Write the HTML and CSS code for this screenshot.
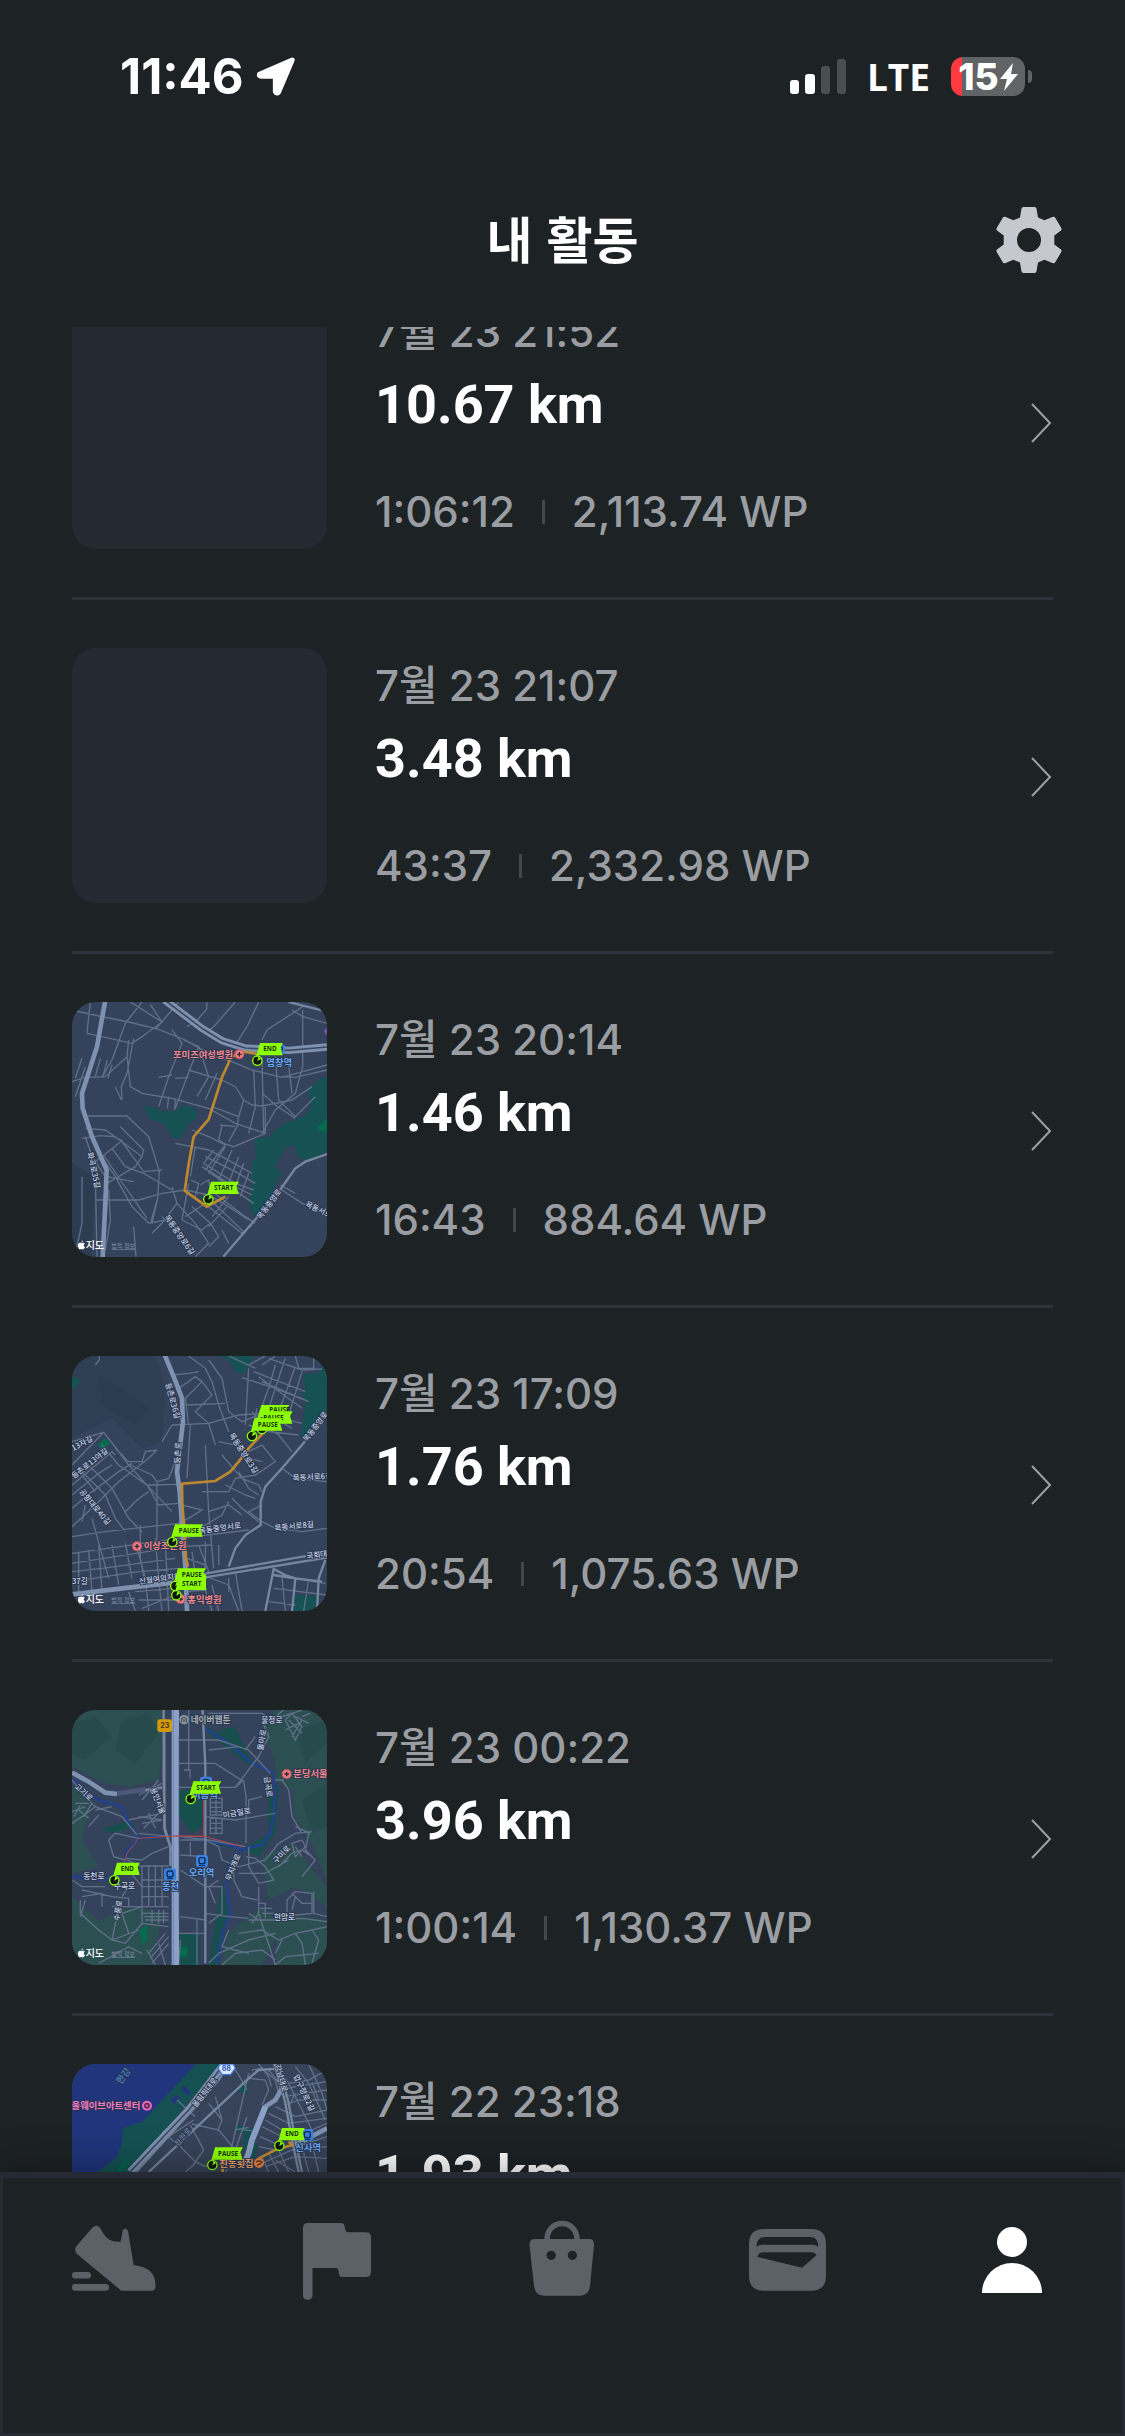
FILE: index.html
```html
<!DOCTYPE html>
<html lang="ko">
<head>
<meta charset="utf-8">
<meta name="viewport" content="width=device-width, initial-scale=1">
<title>내 활동</title>
<link rel="stylesheet" href="styles.css">
</head>
<body>
<svg class="defs" aria-hidden="true">
  <defs>
    <g id="pin"><circle r="14" fill="#10180c" stroke="#8cff00" stroke-width="4"/><path d="M0 1L3-12L12-6Z" fill="#8cff00"/></g>
    <g id="flag-long"><path d="M8-53H92L84-39L91-16H4L-2-2L-6-4Z" fill="#8cff00"/><use href="#pin"/></g>
    <g id="flag-short"><path d="M8-53H76L70-39L76-16H4L-2-2L-6-4Z" fill="#8cff00"/><use href="#pin"/></g>
    <g id="hospital"><circle r="15" fill="#c9525f"/><circle r="12" fill="#e87d86"/><path d="M-7 0H7M0-7V7" stroke="#3a2831" stroke-width="4"/></g>
    <g id="train"><rect x="-18" y="-18" width="36" height="36" rx="8" fill="#3a80e0"/><rect x="-9" y="-10" width="18" height="18" rx="6" fill="none" stroke="#0f2950" stroke-width="4"/><path d="M-9 13H9" stroke="#0f2950" stroke-width="3"/></g>
    <g id="apple" fill="#fff"><path d="M-1-6C3-9 8-8 9-5C5-2 5 3 10 5C8 10 5 13 2 12Q-1 10-4 12C-8 13-12 4-11-1C-10-7-5-9-1-6ZM-1-8Q-1-13 4-15Q4-9-1-8Z"/></g>
  </defs>
</svg>
<div class="app">
  <div class="status">
    <div class="status-side">
      <span class="time">11:46</span>
      <svg class="location" viewBox="474 52 120 118" aria-hidden="true"><path d="M583 61L484 104Q482 110 489 110H532V157Q536 165 542 158Z" fill="#fff" stroke="#fff" stroke-width="15" stroke-linejoin="round"/></svg>
    </div>
    <div class="status-side status-right">
      <svg class="signal" viewBox="0 0 56 36" aria-hidden="true"><g fill="#fff"><rect y="21" width="9" height="14" rx="3"/><rect x="15" y="15" width="10" height="20" rx="3"/></g><g fill="#4a4e51"><rect x="31" y="7" width="9" height="28" rx="3"/><rect x="47" width="9" height="35" rx="3"/></g></svg>
      <span class="network">LTE</span>
      <div class="battery">
        <span class="battery-body"><span class="battery-level">15</span><svg class="bolt" viewBox="0 0 18 28" aria-hidden="true"><path d="M13 0L0 16H7L4 28L18 11H11Z" fill="#fff"/></svg></span>
        <span class="battery-cap"></span>
      </div>
    </div>
  </div>

  <header class="header">
    <h1 class="title">내 활동</h1>
    <button class="settings" type="button" aria-label="설정">
      <svg class="gear" viewBox="-33 -33 66 66" aria-hidden="true"><path fill="#c5c8cf" fill-rule="evenodd" d="M-5.500-33H5.500Q7.300-33 7.600-31L9-22.500L15.500-19.700L24-23.200Q25.600-23.500 26.400-22L32.300-12Q33-10.500 32-9.500L25.300-4.500V4.500L32 9.500Q33 10.500 32.300 12L26.400 22Q25.600 23.500 24 23.200L15.500 19.700L9 22.500L7.600 31Q7.300 33 5.500 33H-5.500Q-7.300 33-7.600 31L-9 22.500L-15.500 19.700L-24 23.200Q-25.600 23.500-26.400 22L-32.300 12Q-33 10.500-32 9.500L-25.300 4.500V-4.500L-32-9.500Q-33-10.500-32.300-12L-26.400-22Q-25.600-23.500-24-23.200L-15.500-19.700L-9-22.500L-7.600-31Q-7.300-33-5.500-33ZM0-12A12 12 0 1 0 0 12A12 12 0 1 0 0-12Z"/></svg>
    </button>
  </header>

  <main class="content">
    <ul class="activities">
      <li class="activity"><a class="row" href="#a1">
        <span class="thumb"></span>
        <span class="info"><span class="date">7월 23 21:52</span><strong class="distance">10.67 km</strong><span class="stats"><span>1:06:12</span><span class="bar"></span><span>2,113.74 WP</span></span></span>
        <svg class="chevron" viewBox="0 0 22 42" aria-hidden="true"><path d="M1 3L19 22L1 41"/></svg>
      </a></li>
      <li class="activity"><a class="row" href="#a2">
        <span class="thumb"></span>
        <span class="info"><span class="date">7월 23 21:07</span><strong class="distance">3.48 km</strong><span class="stats"><span>43:37</span><span class="bar"></span><span>2,332.98 WP</span></span></span>
        <svg class="chevron" viewBox="0 0 22 42" aria-hidden="true"><path d="M1 3L19 22L1 41"/></svg>
      </a></li>
      <li class="activity"><a class="row" href="#a3">
        <svg class="thumb" viewBox="30 36 765 765" role="img" aria-label="경로 지도">
          <rect x="30" y="36" width="765" height="765" fill="#34435b"/>
          <path d="M30 520L100 560L90 800H30Z" fill="#2c394c" opacity=".6"/>
          <g fill="#165153"><path d="M244 346L270 350L300 364L340 362L365 346L395 352L407 370L398 388L376 405L360 446L335 445L305 402L262 386Z"/><path d="M795 262L776 265L738 300L747 345L730 378L665 400L620 440L576 448L583 505L570 515L568 600L560 640L577 680L610 650L657 550L640 530L670 470L695 465L708 500L730 512L795 485Z"/></g>
          <path d="M795 385L763 415L795 430Z" fill="#066a4f"/>
          <g class="streets">
            <path d="M75 130L80 80L85 36M30 60L110 78L200 96L290 118L370 150L450 196L510 215L570 240L660 262L795 225M205 36L300 96L240 140L210 160L75 130M240 36L190 100L150 210L120 262M265 44L300 96M280 118L330 60L350 36M435 36L434 58L400 96L375 110M520 36L455 110L430 130M590 36L555 110L520 165M722 50L615 120L600 150M722 60V230L700 310L640 360L600 430M690 60L722 80L795 100M70 262L130 260L195 200L200 150M30 275L70 262M40 320L70 230M180 330L178 290L195 250L215 145M195 200L205 290L240 310L330 325L440 355L520 400L610 430V350"/>
            <path d="M330 120L360 160L320 260L290 350M365 150L410 170L375 260L340 355M410 170L440 260L405 320M380 240L480 270L520 290L545 330L530 380L450 350M430 330L465 250M545 330L570 345L600 348L690 330L750 290M575 240L580 350L560 430M600 200L605 430M640 200L650 330L700 380L760 320M680 225L690 310M660 260L700 262L795 240M600 310L640 345L700 385M290 262L330 255M340 265L380 262M178 330L160 290M100 260L115 205M122 262L136 210M138 266L150 225M40 265L60 205M320 320L316 355M340 325L338 360M480 405L470 450L490 462L515 470L610 430M475 405L520 410M530 380L525 410L500 455"/>
            <path d="M76 378H195L260 440L292 545L287 625L265 700M70 415L130 420L180 455L240 500L245 480L175 410M60 445L115 437L155 440L180 452L100 515M70 440L90 500L130 560M118 500L160 560L210 650L260 700M125 495L175 570L255 685M150 475L190 530L245 550L330 600M180 455L245 545L300 540M135 580L220 530L240 500M100 630H230L300 610L370 600L440 615L500 650L560 690M135 560L215 575M100 560L105 800M140 600L145 690L130 780M60 560V700L40 790M215 710L222 800M287 625L270 700M330 590L345 640L300 700L270 730M260 700L310 690M345 640L400 700L440 760L400 800"/>
            <path d="M340 460L440 480L480 500L570 550M390 420L440 440L490 465L430 540M400 470L385 560M430 500L520 545L580 580M455 480L425 520L520 580L575 600M440 545L575 640M490 470L440 550M510 480L470 570M530 500L500 580M545 520L520 590M560 550L535 620M420 530L500 580L570 615M380 580L360 690L420 720L445 700L390 650M385 570L410 580L400 620M415 585L440 570L445 600L550 680L580 700M370 680L445 630L550 730M440 650L540 730L570 705M445 700L470 740L440 770M450 680L500 620M495 650L440 710M500 760L480 720M300 680L350 720M795 665L720 640L660 600M655 585L700 610"/>
          </g>
          <path class="avenue-thin" d="M484 800L570 700L640 620L700 535L730 515L795 492"/>
          <path class="avenue" d="M130 30L105 170L60 310L62 355L90 440L134 540L130 640L122 801"/>
          <path class="rail" d="M308 30L420 115L480 152L550 174L680 181L795 171"/><path class="rail-core" d="M308 30L420 115L480 152L550 174L680 181L795 171"/>
          <path class="avenue-thin" d="M680 36L795 65"/>
          <path class="route" d="M586 192L545 185L508 200L480 262L440 388L395 440L382 510L368 602L434 650L490 620"/>
          <circle cx="797" cy="124" r="10" fill="#7052a6"/>
          <g class="map-text red"><text x="333" y="203">포미즈여성병원</text></g><use href="#hospital" x="532" y="193"/>
          <g class="map-text blue"><text x="613" y="227">염창역</text></g>
          <g class="map-text road"><text transform="translate(76 488)rotate(78)">화곡로35길</text><text transform="translate(596 689)rotate(-53)">목동중앙로</text><text transform="translate(728 648)rotate(25)">목동서로</text><text transform="translate(306 682)rotate(55)">목동중앙로6길</text></g>
          <use href="#train" transform="translate(654 178)scale(.8)"/><use href="#flag-short" x="586" y="212"/><text class="flag-text" x="604" y="184">END</text>
          <use href="#flag-long" x="439" y="628"/><text class="flag-text" x="456" y="600">START</text>
          <use href="#apple" x="59" y="766"/><text class="maps-name" x="71" y="777">지도</text><text class="legal" x="148" y="775">법적 정보</text>
        </svg>
        <span class="info"><span class="date">7월 23 20:14</span><strong class="distance">1.46 km</strong><span class="stats"><span>16:43</span><span class="bar"></span><span>884.64 WP</span></span></span>
        <svg class="chevron" viewBox="0 0 22 42" aria-hidden="true"><path d="M1 3L19 22L1 41"/></svg>
      </a></li>
      <li class="activity"><a class="row" href="#a4">
        <svg class="thumb" viewBox="30 33 765 765" role="img" aria-label="경로 지도">
          <rect x="30" y="33" width="765" height="765" fill="#34435b"/>
          <path d="M30 33H280L310 130L300 290L240 310L150 220L30 280Z" fill="#2f3c51" opacity=".75"/><path d="M110 90L180 130L260 190L220 240L120 180Z" fill="#2b374b" opacity=".4"/>
          <g fill="#165153"><path d="M466 33L500 45L520 80L545 88L575 33ZM795 60L775 70L768 85L720 88L730 120L720 150L732 165L716 275L750 260L795 205ZM30 95L50 98L54 112L44 128L30 132ZM700 750L765 752L760 798H695Z"/></g><path d="M107 298L130 279L145 295L120 317Z" fill="#066a4f"/>
          <g class="streets">
            <path d="M100 60L112 45V33M30 290L125 262L155 300L200 360L250 415L330 500M30 360L125 262M30 420L150 320L160 330M30 450L110 385L150 360M30 490L90 440L170 380L210 355M50 370L130 450L160 520L190 560M70 350L150 430L200 520L240 560M30 545L100 480L170 410L260 340L285 315M100 440L60 390M120 300L170 360L255 420L350 418M160 310L200 350L240 350L250 320L285 315M205 360L270 390L285 410V600M285 410L320 400L340 350M330 240L300 290M255 420L290 480L350 475M190 500L225 465L260 440M90 520L140 700M60 530L70 480M30 575L130 560L350 535L380 520"/>
            <path d="M380 33L430 70L450 110L470 180L500 260M440 45L480 100L500 200L540 230L590 210M330 90L380 85L410 80M350 130L400 95L420 110L370 160L380 240M330 240L440 235L530 210L600 205L720 235M375 180L490 175M420 110L450 150L400 200L440 235L460 300M385 240L375 400M430 300L440 500L455 670M500 33L580 70M540 98L640 130L740 170M560 70L550 240M560 60L610 33M575 80L730 140M590 95L720 190M600 60L640 33M620 40L720 75L780 72M600 110L730 165M640 60L620 130L590 210M670 40L640 130L620 190M700 65L650 200M720 80L680 210M700 33L710 70H755V33M560 240L620 260L710 270M570 200L600 240L650 270L690 320M600 180L640 220L690 250M585 190L570 260M470 290L520 300L560 340L600 350M480 330L540 400L590 420L600 440M530 380L560 430L590 450M490 420L550 450L580 460M420 440H500L520 400L580 390L640 350L600 300L560 320M510 460L540 490L590 530M500 470L480 510L430 540L360 570M440 500L500 480L540 510M360 480L420 495L380 520M600 480L560 500L600 530L640 550L720 560L795 550M660 370L700 400L795 410"/>
            <path d="M30 625L350 580L560 555M30 655L350 605L450 600M30 680L120 670L340 640M30 710L230 680L350 670M50 620V750M80 615L90 740M110 600L120 740M150 600L170 720M190 595L210 700M220 590L250 700L260 798M235 540V640L250 720M280 580L290 700L300 798M310 590L320 798M390 620L400 690M410 600L440 680M430 590V670M470 600V660M375 640L430 660M220 740L340 730M230 765H340M240 790L340 750M200 740L220 798M370 740L430 735L450 798M420 690L500 720L530 798M520 680L540 798M630 690L790 715M635 730L795 750M620 770L700 780M660 695L670 798M740 705L725 798M450 720L470 798M500 700V740"/>
          </g>
          <path class="avenue" d="M308 30L335 95L360 160L363 230L345 380L353 440L360 540L370 660L375 798"/>
          <path class="avenue" d="M30 748L200 728L335 713L430 690"/><path d="M430 686L795 622M430 697L795 638" class="avenue-thin"/>
          <path class="avenue-thin" d="M795 205L720 300L660 370L610 425L596 470V540L550 570L520 610L500 665M610 798L635 672L670 690L700 700L690 798M790 645L770 700L765 798M635 690L700 700L780 710"/>
          <path class="route" d="M605 262L560 310L530 350L505 380L460 408L360 416L361 480L368 560L372 640L378 665"/>
          <g class="map-text road"><text transform="translate(310 116)rotate(75)">등촌로36길</text><text transform="translate(354 356)rotate(-88)">등촌로</text><text transform="translate(36 402)rotate(-38)">등촌로13아길</text><text transform="translate(34 318)rotate(-28)">13자길</text><text transform="translate(50 440)rotate(50)">공항대로40길</text><text transform="translate(500 270)rotate(57)">목동중앙로3길</text><text transform="translate(735 292)rotate(-53)">목동중앙로</text><text transform="translate(692 407)rotate(-3)">목동서로6길</text><text transform="translate(638 558)rotate(-6)">목동서로8길</text><text transform="translate(412 566)rotate(-8)">목동중앙서로</text><text transform="translate(232 718)rotate(-8)">신월여의지하</text><text transform="translate(734 642)rotate(-8)">국회대로</text><text x="30" y="718">37길</text></g>
          <g class="map-text red"><text x="245" y="613">이상조은원</text><text x="376" y="773">홍익병원</text></g><use href="#hospital" x="225" y="604"/><use href="#hospital" x="356" y="762"/>
          <use href="#flag-long" x="590" y="233"/><text class="flag-text" x="622" y="202">PAUSE</text><use href="#flag-long" x="600" y="252"/><text class="flag-text" x="604" y="224">PAUSE</text><use href="#flag-long" x="570" y="273"/><text class="flag-text" x="587" y="245">PAUSE</text>
          <use href="#flag-long" x="331" y="591"/><text class="flag-text" x="350" y="564">PAUSE</text>
          <use href="#flag-long" x="340" y="723"/><use href="#flag-long" x="343" y="751"/><path d="M350 688H432V735H352Z" fill="#8cff00"/><text class="flag-text" x="359" y="696">PAUSE</text><text class="flag-text" x="360" y="723">START</text>
          <use href="#apple" x="59" y="763"/><text class="maps-name" x="71" y="774">지도</text><text class="legal" x="148" y="772">법적 정보</text>
        </svg>
        <span class="info"><span class="date">7월 23 17:09</span><strong class="distance">1.76 km</strong><span class="stats"><span>20:54</span><span class="bar"></span><span>1,075.63 WP</span></span></span>
        <svg class="chevron" viewBox="0 0 22 42" aria-hidden="true"><path d="M1 3L19 22L1 41"/></svg>
      </a></li>
      <li class="activity"><a class="row" href="#a5">
        <svg class="thumb" viewBox="30 30 765 765" role="img" aria-label="경로 지도">
          <rect x="30" y="30" width="765" height="765" fill="#34435b"/>
          <g fill="#2c5052"><path d="M30 30H300V150L290 240L200 260L130 250L30 200ZM640 30H795V540L750 430L700 360L690 270L640 240L640 180L600 90ZM30 590L150 700L30 700ZM30 260L90 300L60 420L110 500L30 520ZM600 470L690 430L760 520L795 560V620L700 560L620 600ZM30 700L200 620L300 640L270 795H30ZM500 700L600 620L660 680L600 795H480ZM650 640L795 660V795H640Z"/></g>
          <g fill="#25484b" opacity=".7"><path d="M30 70L100 50L150 110L70 180L30 160ZM180 60L260 40L290 100L220 190L160 150ZM700 90L795 60V130L730 190ZM720 300L795 250V380L750 400Z"/></g>
          <g fill="#164f4d"><path d="M430 80L500 110L590 200L560 195L440 100ZM345 270H420V380L390 400L345 340ZM620 250L650 260L640 400L590 470L540 450L620 400ZM350 700H410V795H350ZM480 540L500 640L470 795H440ZM470 90L520 80L560 170ZM120 390L200 360L220 380L150 400ZM430 415L540 450L440 430Z"/></g>
          <path d="M232 690L256 675V720L240 735ZM352 740H375V770H352Z" fill="#066a4f"/>
          <g class="river"><path d="M430 85L500 130L570 190L630 215L637 250V340L625 400L600 435L540 448L500 435L350 405L230 415L200 370L180 320L110 300L80 280L30 235M540 448L500 500L495 560L505 640L480 700L465 790M230 415L195 450L180 510L130 540L30 530"/></g>
          <g class="streets">
            <path d="M350 120H470L560 150L625 220M350 190H460L545 245L552 290V430M345 262H520L545 240M355 410L440 420L550 440M380 30V210M366 210H384V235M440 150L530 140M420 30L430 190V420M30 240L70 290L100 320L180 350L225 405M100 320L60 350L30 370M100 330L150 320M65 350L90 310M80 355L50 330M110 345L80 380M230 415L160 400L140 420L155 470L190 480M245 270L300 265M230 285L300 250M240 300L290 240M300 340L200 360M240 370L300 360L230 350M260 340L280 385M245 385L290 340M230 400L330 410M190 475L240 480L270 460L320 440"/>
            <path d="M445 295H480V345H445ZM445 308H480M445 322H480M445 335H480M462 295V345M445 355H480V400H445ZM445 370H480M445 385H480M462 355V400M430 350L520 360L640 340M560 340V300L600 290M430 420L470 440L480 480L530 500L610 480L650 430L700 400L750 395M552 470L580 475L610 500L635 540L590 550L560 500V440M515 470V540L540 590L585 600M470 540L440 560L460 610M590 560L590 640L640 795M530 520H610L680 480M690 430L720 420L730 440L700 470ZM700 440L720 470M740 400L730 450L760 480L720 530M650 500L690 460L720 450L750 470M660 240L680 270L690 350L720 400M640 240L665 240M700 380L745 400"/>
            <path d="M240 498H320M240 540H320M240 560H320M240 590H320M150 620H320M240 498V670M260 500V620M280 500V620M300 500V620M195 480L240 500M190 500L240 560M240 640H320M245 650H320M250 660H320M240 670L320 680M270 630V670M290 630V670M305 630V670M60 570L150 590L200 595V620M30 540L60 560H130M55 600V640L110 690L150 720M60 590L120 580V620M70 600L55 650M170 620L150 720L190 730L240 670M180 590L200 560M200 700L180 640L240 620M150 720L230 690M110 790L200 740L240 760M260 760L310 700M265 775L320 710M270 790L320 730M255 750L280 795M290 730L310 795M355 420H425M355 465L425 470M385 425V465M355 510L430 560M355 650L430 660M350 700H430M405 660V795M355 720L350 795M430 560H480V640L440 670M430 640L500 650L560 655"/>
            <path d="M560 660H650L720 655L795 665M675 640V600L700 575L750 580V640L700 645M590 610H610V655M560 640L590 660M595 625H630M600 640H640M690 580L720 610H750M700 590L690 630M755 575V640L795 650M530 700L600 690L650 720L700 700L750 690L795 680M640 795L670 770L770 760M440 790L470 760L560 720L640 700M480 795L520 760L600 750L640 780M500 690L480 740L560 760M570 670L590 640M700 700L720 730L730 795M660 720L640 760M750 690L770 720L750 790M670 60L690 40L720 80L700 120ZM680 60L720 100M700 50L740 70M670 90L710 70M690 110L720 60M440 40H600L630 60L720 30M600 60L620 110L590 170L520 262M640 50L665 30M720 50L745 40M550 150L580 110M40 310L80 310M30 335L70 320M35 350L55 315"/>
          </g>
          <path d="M30 218L80 245L130 278L165 282" class="avenue"/><path d="M165 281L250 268" stroke="#4c5876" stroke-width="14" fill="none"/><path d="M250 270L300 262" class="avenue-thin"/>
          <path d="M305 30V230L308 390L325 440V498M422 30L430 200V790" class="avenue-thin"/><path d="M307 90V380L328 450" class="avenue-thin"/>
          <path d="M340 30V795" stroke="#8b9fc7" stroke-width="22" fill="none"/><path d="M334 30V795M350 110V660" stroke="#7184ad" stroke-width="3" fill="none"/>
          <path d="M425 250V408L340 408L230 415L195 460L185 495M340 408L430 410L540 440" class="route-red"/>
          <rect x="286" y="58" width="44" height="38" rx="7" fill="#d39b0b"/><text x="295" y="84" class="shield">23</text>
          <circle cx="366" cy="59" r="14" fill="#8c959c"/><path d="M359 66V56L366 52L373 56V66M366 66V57" stroke="#39434d" stroke-width="3" fill="none"/>
          <g class="map-text gray"><text x="386" y="69">네이버웹툰</text></g>
          <g class="map-text road"><text x="598" y="70">불정로</text><text transform="translate(602 152)rotate(-80)">돌마로</text><text transform="translate(606 230)rotate(82)">금곡로</text><text transform="translate(36 262)rotate(42)">고기로</text><text transform="translate(264 266)rotate(68)">용인서울</text><text transform="translate(484 354)rotate(-10)">미금일로</text><text transform="translate(643 492)rotate(-47)">구미로</text><text transform="translate(505 544)rotate(-68)">무지개로</text><text x="64" y="536">동천로</text><text x="156" y="566">수곡로</text><text transform="translate(172 664)rotate(-82)">수풍로</text><text x="636" y="660">현암로</text></g>
          <g class="map-text blue"><text x="390" y="295">미금역</text><text x="380" y="528">오리역</text><text x="300" y="569">동천</text></g>
          <g class="map-text red"><text x="694" y="232">분당서울대</text></g><use href="#hospital" x="674" y="222"/>
          <use href="#train" x="432" y="248"/><use href="#train" x="420" y="483"/><use href="#train" x="324" y="523"/>
          <use href="#flag-long" x="386" y="297"/><text class="flag-text" x="403" y="270">START</text>
          <use href="#flag-short" x="157" y="541"/><text class="flag-text" x="176" y="513">END</text>
          <use href="#apple" x="59" y="760"/><text class="maps-name" x="71" y="771">지도</text><text class="legal" x="148" y="769">법적 정보</text>
        </svg>
        <span class="info"><span class="date">7월 23 00:22</span><strong class="distance">3.96 km</strong><span class="stats"><span>1:00:14</span><span class="bar"></span><span>1,130.37 WP</span></span></span>
        <svg class="chevron" viewBox="0 0 22 42" aria-hidden="true"><path d="M1 3L19 22L1 41"/></svg>
      </a></li>
      <li class="activity"><a class="row" href="#a6">
        <svg class="thumb" viewBox="30 42 765 765" role="img" aria-label="경로 지도">
          <rect x="30" y="42" width="765" height="765" fill="#364359"/>
          <path d="M30 42H480L200 366L120 440H30Z" fill="#155153"/><path d="M30 42H402L240 216L210 224L182 235L180 275L165 320L110 366L30 420ZM326 150L342 134L354 144L335 163ZM358 114L368 107L388 130L378 138Z" fill="#20357c"/>
          <path d="M170 350L190 328L204 340L180 366H168Z" fill="#06624c"/>
          <path d="M552 92L558 130L522 122ZM524 226L574 236L560 310L540 280L550 250L522 242ZM575 262L588 290L575 330L560 320ZM606 160L625 180L600 200Z" fill="#155153"/>
          <g class="streets">
            <path d="M560 70L500 330L480 420M460 140L480 210L468 240L390 222M385 225L425 300L390 350M300 245L350 285L400 335L430 350L460 320L500 310M320 260L395 210M345 150L400 200M440 160L480 210M520 60L545 100L555 120M560 85L610 90L620 120L600 165M470 240L520 300L500 330M400 340L370 366M545 240L570 242M520 240L560 232M555 200L520 300M300 248L330 230"/>
            <path d="M570 60L600 55L640 90L650 130L620 170M590 42L620 80L628 110M620 60L660 110M650 60L680 100L740 90L795 60M680 100L720 180L750 240L795 220M700 50L740 100L790 210M740 42L780 130L795 180M660 120L700 110L795 95M665 140L795 120M670 165L710 150L795 150M640 170L700 200L795 180M620 190L680 220L795 205M610 210L660 240M600 230L680 270M595 260L660 290M590 290L640 300M700 130L680 170M720 110L740 180M750 95L770 150M600 340L690 300L795 290M620 366L600 320M650 366L620 310M680 366L650 300M610 350L700 320L795 325M740 366L720 290M770 366L750 280M640 330L700 366M795 260L720 285"/>
          </g>
          <path class="avenue-thin" d="M640 42L670 160L690 270L710 366M650 42L680 160L700 270L720 366M260 366L560 85L590 60L660 55"/>
          <path class="rail" d="M204 366L380 180L480 50"/><path class="rail-core" d="M204 366L380 180L480 50"/><path class="avenue-thin" d="M222 366L400 170L470 90L500 42"/>
          <path d="M550 340L570 270L590 220L610 170L640 150L660 115L640 42" class="avenue"/><path d="M545 345L560 310L570 270L590 220L610 170" stroke="#8b9fc7" stroke-width="18" fill="none"/><path class="avenue" d="M700 285L795 235"/>
          <path class="route" d="M482 366V345M590 325L640 300L690 285L680 275"/>
          <path d="M474 42L468 55L480 74H506L520 55L514 42Z" fill="#dce6ff" stroke="#3e76d8" stroke-width="4"/><text x="479" y="63" class="shield blue-shield">88</text>
          <g class="map-text river-name"><text transform="translate(176 104)rotate(-52)">한강</text></g>
          <g class="map-text pink"><text x="3" y="177">서울웨이브아트센터</text></g><circle cx="255" cy="167" r="15" fill="#e769b7"/><circle cx="255" cy="167" r="6" fill="none" stroke="#5b2853" stroke-width="5"/>
          <g class="map-text road"><text transform="translate(402 174)rotate(-52)">올림픽대로</text><text transform="translate(638 46)rotate(74)">강남대로</text><text transform="translate(694 78)rotate(65)">압구정로2길</text></g><g class="map-text road muted"><text transform="translate(348 290)rotate(-50)">잠원로</text></g>
          <g class="map-text orange"><text x="472" y="350">진동횟집</text></g><circle cx="591" cy="339" r="15" fill="#e58545"/><path d="M582 336Q591 330 600 336Q592 345 585 345" fill="none" stroke="#653a28" stroke-width="4"/>
          <g class="map-text blue"><text x="700" y="302">신사역</text></g><use href="#train" x="736" y="255"/>
          <use href="#flag-short" x="652" y="287"/><text class="flag-text" x="670" y="259">END</text>
          <use href="#flag-long" x="451" y="345"/><text class="flag-text" x="468" y="317">PAUSE</text>
        </svg>
        <span class="info"><span class="date">7월 22 23:18</span><strong class="distance">1.93 km</strong><span class="stats"></span></span>
        <svg class="chevron" viewBox="0 0 22 42" aria-hidden="true"><path d="M1 3L19 22L1 41"/></svg>
      </a></li>
    </ul>
  </main>

  <nav class="tabs" aria-label="주 메뉴">
    <a class="tab" href="#run" aria-label="달리기"><svg viewBox="0 0 84 84" aria-hidden="true"><path d="M20.500 10.500Q25.500 6.500 28.500 11.500C32 19 37 25.500 48.500 24.700Q50 19 50.500 14Q53 9 56 14L61.600 48C77 50 84 56 83.500 70Q83 73.700 79.500 73.700H49.400L5 37Q1.500 33 4.500 29Z"/><rect y="55" width="19" height="6.500" rx="3.200"/><rect y="67" width="37" height="6.700" rx="3.300"/></svg></a>
    <a class="tab" href="#goal" aria-label="목표"><svg viewBox="0 0 84 84" aria-hidden="true"><path d="M7 78V11Q7 6 12 6H45Q48 6 48.500 9L49.400 13Q50 15.300 52 15.300H70Q75 15.300 75 20.300V55Q75 60 70 60H46Q43.500 60 43 57L42.300 53Q42 51 40 51H16.500V78Q16.500 82.700 11.700 82.700Q7 82.700 7 78Z"/></svg></a>
    <a class="tab" href="#shop" aria-label="상점"><svg viewBox="0 0 84 84" aria-hidden="true"><path fill-rule="evenodd" d="M14 22H68Q73.300 22 73 28L69 69Q68 78.700 59 78.700H23Q14 78.700 13 69L8.500 28Q8.300 22 14 22ZM30.200 33.700A4.600 4.600 0 1 0 30.200 42.900A4.600 4.600 0 1 0 30.200 33.700ZM51.400 33.700A4.600 4.600 0 1 0 51.400 42.900A4.600 4.600 0 1 0 51.400 33.700Z"/><path d="M26 23C26 1 56 1 56 23" fill="none" stroke="currentColor" stroke-width="5.500"/></svg></a>
    <a class="tab" href="#wallet" aria-label="지갑"><svg viewBox="0 0 84 84" aria-hidden="true"><path fill-rule="evenodd" d="M19 12H66Q81 12 81 27V59Q81 73.700 66 73.700H19Q4 73.700 4 59V27Q4 12 19 12ZM20 20Q11.600 20 11.600 29.700Q14 27.700 18 27.700H67Q71 27.700 73.300 29.700Q73.300 20 65 20ZM18 35.300Q13 36 12.400 40L57 50.700L71.500 38.300Q70 35.300 66.400 35.300Z"/></svg></a>
    <a class="tab active" href="#me" aria-label="내 활동" aria-current="page"><svg viewBox="0 0 84 84" aria-hidden="true"><circle cx="43" cy="25" r="15"/><path d="M13 76A30 30 0 0 1 73 76Z"/></svg></a>
  </nav>
</div>
</body>
</html>
```
FILE: styles.css
```css
* { box-sizing: border-box; }

body {
  margin: 0;
  background: #1d2225;
  color: #fff;
  font-family: Inter, "Noto Sans CJK KR", sans-serif;
}

a { color: inherit; text-decoration: none; }

.defs { position: absolute; width: 0; height: 0; }

.app {
  display: flex;
  flex-direction: column;
  height: 100vh;
  overflow: hidden;
}

/* Status bar */
.status {
  display: flex;
  flex: none;
  align-items: center;
  justify-content: space-between;
  height: 153px;
  padding: 0 93px 0 120px;
}
.status-side { display: flex; align-items: center; gap: 12px; }
.status-right { gap: 21px; }
.time { font-size: 49px; font-weight: 700; line-height: 56px; }
.location { width: 40px; height: 39px; }
.signal { width: 56px; height: 36px; }
.network { font-size: 37px; font-weight: 700; line-height: 46px; font-family: "Open Sans", sans-serif; }
.battery { display: flex; align-items: center; gap: 3px; }
.battery-body {
  display: flex;
  align-items: center;
  justify-content: center;
  gap: 1px;
  width: 74px;
  height: 39px;
  border-radius: 12px;
  background: linear-gradient(90deg, #ff3a3f 11px, #606467 11px);
}
.battery-level { font-size: 37px; font-weight: 800; line-height: 39px; }
.bolt { width: 18px; height: 28px; }
.battery-cap { width: 4px; height: 13px; border-radius: 0 4px 4px 0; background: #606467; }

/* Title bar */
.header {
  display: grid;
  flex: none;
  grid-template-columns: 1fr auto 1fr;
  align-items: center;
  height: 174px;
  padding: 0 63px;
}
.title {
  grid-column: 2;
  margin: 0;
  padding-bottom: 6px;
  font-family: "Noto Sans CJK KR", sans-serif;
  font-size: 50px;
  font-weight: 700;
  line-height: 60px;
}
.settings {
  justify-self: end;
  padding: 0;
  border: 0;
  background: none;
}
.gear { display: block; width: 66px; height: 66px; }

/* Activity list, scrolled part of the way through its first row */
.content { flex: 1; min-height: 0; overflow: hidden; }
.activities { margin: -81px 72px 0; padding: 0; list-style: none; }
.activity { border-bottom: 3px solid #2b333b; }
.row { display: flex; align-items: center; gap: 48px; padding: 48px 0; }
.thumb {
  flex: none;
  width: 255px;
  height: 255px;
  border-radius: 24px;
  background: #242a32;
}
.info { display: flex; flex: 1; flex-direction: column; }
.date, .stats { color: #9a9ea3; font-size: 42px; font-weight: 500; line-height: 51px; }
.distance {
  margin: 16px 0 50px;
  font-family: Roboto, sans-serif;
  font-size: 54px;
  font-weight: 700;
  line-height: 63px;
}
.stats { display: flex; align-items: center; gap: 27px; min-height: 51px; }
.bar { width: 3px; height: 24px; background: #44484d; }
.chevron { flex: none; width: 22px; height: 42px; fill: none; stroke: #9da1a6; stroke-width: 2; }

/* Map thumbnails */
.streets { fill: none; stroke: #617089; stroke-width: 4; }
.avenue { fill: none; stroke: #7f91b0; stroke-width: 14; }
.avenue-thin { fill: none; stroke: #75869f; stroke-width: 7; }
.rail { fill: none; stroke: #7f91b0; stroke-width: 22; }
.rail-core { fill: none; stroke: #3b4a63; stroke-width: 5; }
.river { fill: none; stroke: #24408a; stroke-width: 8; }
.route { fill: none; stroke: #bd8830; stroke-width: 8; }
.route-red { fill: none; stroke: #a9484c; stroke-width: 3; }
.map-text {
  font-family: "Noto Sans CJK KR", sans-serif;
  font-size: 28px;
  font-weight: 700;
  paint-order: stroke;
  stroke: #27344a;
  stroke-width: 5px;
}
.map-text.road { fill: #c5d0e6; font-size: 23px; font-weight: 500; }
.map-text.muted { fill: #7688a6; }
.map-text.red { fill: #f0868e; }
.map-text.blue { fill: #68a6f5; }
.map-text.gray { fill: #a8b0b8; font-size: 26px; }
.map-text.pink { fill: #f47bc7; }
.map-text.orange { fill: #eea069; }
.map-text.river-name { fill: #4278c4; }
.flag-text { fill: #17330a; font-family: "Open Sans", sans-serif; font-size: 19px; font-weight: 700; }
.shield { fill: #40351b; font-family: Inter, sans-serif; font-size: 21px; font-weight: 700; }
.blue-shield { fill: #2459bc; }
.maps-name { fill: #fff; font-family: "Noto Sans CJK KR", sans-serif; font-size: 30px; font-weight: 500; }
.legal { fill: #8390a5; font-family: "Noto Sans CJK KR", sans-serif; font-size: 18px; text-decoration: underline; }

/* Bottom navigation */
.tabs {
  z-index: 1;
  display: flex;
  flex: none;
  justify-content: space-between;
  padding: 39px 69px 132px;
  border: solid #252a33;
  border-width: 6px 3px 3px;
  background: #1d2225;
  box-shadow: 0 -6px 36px rgb(0 0 0 / 30%);
}
.tab { width: 84px; height: 84px; color: #5b6167; }
.tab svg { display: block; width: 84px; height: 84px; fill: currentColor; }
.tab.active { color: #fff; }
```
